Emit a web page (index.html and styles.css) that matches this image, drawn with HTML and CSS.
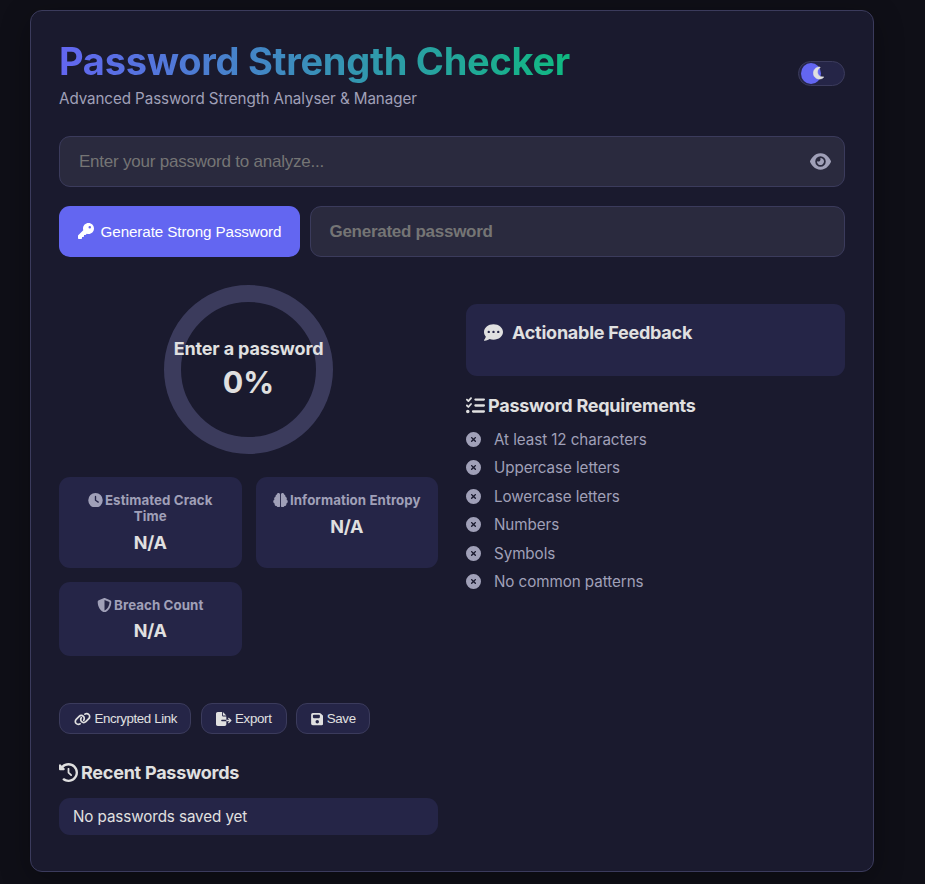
FILE: index.html
```html
<!DOCTYPE html>
<html lang="en">
<head>
<meta charset="utf-8">
<title>Password Strength Checker</title>
<link rel="stylesheet" href="styles.css">
</head>
<body>
<main class="card">
  <header class="header">
    <div>
      <h1 class="title">Password Strength Checker</h1>
      <p class="subtitle">Advanced Password Strength Analyser &amp; Manager</p>
    </div>
    <div class="toggle"><span class="knob"></span><svg class="moon" viewBox="0 0 384 512"><path d="M223.5 32C100 32 0 132.3 0 256S100 480 223.5 480c60.6 0 115.5-24.2 155.8-63.4c5-4.9 6.3-12.5 3.1-18.7s-10.1-9.7-17-8.5c-9.8 1.7-19.8 2.6-30.1 2.6c-96.9 0-175.5-78.8-175.5-176c0-65.8 36-123.1 89.3-153.3c6.1-3.5 9.2-10.5 7.7-17.3s-7.3-11.9-14.3-12.5c-6.3-.5-12.6-.8-19-.8z"/></svg></div>
  </header>

  <div class="field password-field">
    <span class="placeholder">Enter your password to analyze...</span>
    <svg class="eye" viewBox="0 0 576 512"><path d="M288 32c-80.8 0-145.5 36.8-192.6 80.6C48.6 156 17.3 208 2.5 243.7c-3.3 7.9-3.3 16.7 0 24.6C17.3 304 48.6 356 95.4 399.4C142.5 443.2 207.2 480 288 480s145.5-36.8 192.6-80.6c46.8-43.5 78.1-95.4 93-131.1c3.3-7.9 3.3-16.7 0-24.6c-14.9-35.7-46.2-87.7-93-131.1C433.5 68.8 368.8 32 288 32zM144 256a144 144 0 1 1 288 0 144 144 0 1 1 -288 0zm144-64c0 35.3-28.7 64-64 64c-7.1 0-13.9-1.2-20.3-3.3c-5.5-1.8-11.9 1.6-11.7 7.4c.3 6.9 1.3 13.8 3.2 20.7c13.7 51.2 66.4 81.6 117.6 67.9s81.6-66.4 67.9-117.6c-11.1-41.5-47.8-69.4-88.6-71.1c-5.8-.2-9.2 6.1-7.4 11.7c2.1 6.4 3.3 13.2 3.3 20.3z"/></svg>
  </div>

  <div class="generator">
    <button class="generate"><svg class="key" viewBox="0 0 512 512"><path d="M336 352c97.2 0 176-78.8 176-176S433.2 0 336 0S160 78.8 160 176c0 18.7 2.9 36.8 8.3 53.7L7 391c-4.5 4.5-7 10.6-7 17v80c0 13.3 10.7 24 24 24h80c13.3 0 24-10.7 24-24V448h40c13.3 0 24-10.7 24-24V384h40c6.4 0 12.5-2.5 17-7l33.3-33.3c16.9 5.4 35 8.3 53.7 8.3zM376 96a40 40 0 1 1 0 80 40 40 0 1 1 0-80z"/></svg><span>Generate Strong Password</span></button>
    <div class="field generated"><span class="placeholder">Generated password</span></div>
  </div>

  <div class="columns">
    <section>
      <div class="meter">
        <span class="meter-label">Enter a password</span>
        <span class="meter-value">0%</span>
      </div>
      <div class="stats">
        <div class="stat">
          <h3><svg viewBox="0 0 512 512"><path d="M256 0a256 256 0 1 1 0 512A256 256 0 1 1 256 0zM232 120V256c0 8 4 15.5 10.7 20l96 64c11 7.4 25.9 4.4 33.3-6.7s4.4-25.9-6.7-33.3L280 243.2V120c0-13.3-10.7-24-24-24s-24 10.7-24 24z"/></svg>Estimated Crack Time</h3>
          <p>N/A</p>
        </div>
        <div class="stat">
          <h3><svg viewBox="0 0 512 512"><path d="M184 0c30.9 0 56 25.1 56 56V456c0 30.9-25.1 56-56 56c-28.9 0-52.7-21.9-55.7-50.1c-5.2 1.4-10.7 2.1-16.3 2.1c-35.3 0-64-28.7-64-64c0-7.4 1.3-14.6 3.6-21.2C21.4 367.4 0 338.2 0 304c0-31.9 18.7-59.5 45.8-72.3C37.1 220.8 32 207 32 192c0-30.7 21.6-56.3 50.4-62.6C80.8 123.9 80 118 80 112c0-29.9 20.6-55.1 48.3-62.1C131.3 21.9 155.1 0 184 0zM328 0c28.9 0 52.6 21.9 55.7 49.9c27.8 7 48.3 32.1 48.3 62.1c0 6-.8 11.9-2.4 17.4c28.8 6.2 50.4 31.9 50.4 62.6c0 15-5.1 28.8-13.8 39.7C493.3 244.5 512 272.1 512 304c0 34.2-21.4 63.4-51.6 74.8c2.3 6.6 3.6 13.8 3.6 21.2c0 35.3-28.7 64-64 64c-5.6 0-11.1-.7-16.3-2.1c-3 28.2-26.8 50.1-55.7 50.1c-30.9 0-56-25.1-56-56V56c0-30.9 25.1-56 56-56z"/></svg>Information Entropy</h3>
          <p>N/A</p>
        </div>
        <div class="stat">
          <h3><svg viewBox="0 0 512 512"><path d="M256 0c4.6 0 9.2 1 13.4 2.9L457.7 82.8c22 9.3 38.4 31 38.3 57.2c-.5 99.2-41.3 280.7-213.6 363.2c-16.7 8-36.1 8-52.8 0C57.3 420.7 16.5 239.2 16 140c-.1-26.2 16.3-47.9 38.3-57.2L242.7 2.9C246.8 1 251.4 0 256 0zm0 66.8V444.8C394 378 431.1 230.1 432 141.4L256 66.8l0 0z"/></svg>Breach Count</h3>
          <p>N/A</p>
        </div>
      </div>
      <div class="actions">
        <button><svg class="w-link" viewBox="0 0 640 512"><path d="M579.8 267.7c56.5-56.5 56.5-148 0-204.5c-50-50-128.8-56.5-186.3-15.4l-1.6 1.1c-14.4 10.3-17.7 30.3-7.4 44.6s30.3 17.7 44.6 7.4l1.6-1.1c32.1-22.9 76-19.3 103.8 8.6c31.5 31.5 31.5 82.5 0 114L422.3 334.8c-31.5 31.5-82.5 31.5-114 0c-27.9-27.9-31.5-71.8-8.6-103.8l1.1-1.6c10.3-14.4 6.9-34.4-7.4-44.6s-34.4-6.9-44.6 7.4l-1.1 1.6C206.5 251.2 213 330 263 380c56.5 56.5 148 56.5 204.5 0L579.8 267.7zM60.2 244.3c-56.5 56.5-56.5 148 0 204.5c50 50 128.8 56.5 186.3 15.4l1.6-1.1c14.4-10.3 17.7-30.3 7.4-44.6s-30.3-17.7-44.6-7.4l-1.6 1.1c-32.1 22.9-76 19.3-103.8-8.6C74 372 74 321 105.5 289.5L217.7 177.2c31.5-31.5 82.5-31.5 114 0c27.9 27.9 31.5 71.8 8.6 103.9l-1.1 1.6c-10.3 14.4-6.9 34.4 7.4 44.6s34.4 6.9 44.6-7.4l1.1-1.6C433.5 260.8 427 182 377 132c-56.5-56.5-148-56.5-204.5 0L60.2 244.3z"/></svg><span class="tight">Encrypted Link</span></button>
        <button><svg class="w-export" viewBox="0 0 576 512"><path d="M0 64C0 28.7 28.7 0 64 0H224V128c0 17.7 14.3 32 32 32H384V288H216c-13.3 0-24 10.7-24 24s10.7 24 24 24H384V448c0 35.3-28.7 64-64 64H64c-35.3 0-64-28.7-64-64V64zM384 336V288H494.1l-39-39c-9.4-9.4-9.4-24.6 0-33.9s24.6-9.4 33.9 0l80 80c9.4 9.4 9.4 24.6 0 33.9l-80 80c-9.4 9.4-24.6 9.4-33.9 0s-9.4-24.6 0-33.9l39-39H384zm0-208H256V0L384 128z"/></svg><span>Export</span></button>
        <button><svg class="w-save" viewBox="0 0 448 512"><path d="M64 32C28.7 32 0 60.7 0 96V416c0 35.3 28.7 64 64 64H384c35.3 0 64-28.7 64-64V173.3c0-17-6.7-33.3-18.7-45.3L352 50.7C340 38.7 323.7 32 306.7 32H64zm0 96c0-17.7 14.3-32 32-32H288c17.7 0 32 14.3 32 32v64c0 17.7-14.3 32-32 32H96c-17.7 0-32-14.3-32-32V128zM224 288a64 64 0 1 1 0 128 64 64 0 1 1 0-128z"/></svg><span>Save</span></button>
      </div>
      <h2 class="recent-title"><svg viewBox="0 0 512 512"><path d="M75 75L41 41C25.9 25.9 0 36.6 0 57.9V168c0 13.3 10.7 24 24 24H134.1c21.4 0 32.1-25.9 17-41l-30.8-30.8C155 85.5 203 64 256 64c106 0 192 86 192 192s-86 192-192 192c-40.8 0-78.6-12.7-109.7-34.4c-14.5-10.1-34.4-6.6-44.6 7.9s-6.6 34.4 7.9 44.6C151.2 495 201.7 512 256 512c141.4 0 256-114.6 256-256S397.4 0 256 0C185.3 0 121.3 28.7 75 75zm181 53c-13.3 0-24 10.7-24 24V256c0 6.4 2.5 12.5 7 17l72 72c9.4 9.4 24.6 9.4 33.9 0s9.4-24.6 0-33.9l-65-65V152c0-13.3-10.7-24-24-24z"/></svg>Recent Passwords</h2>
      <div class="recent-item">No passwords saved yet</div>
    </section>

    <section class="side">
      <div class="feedback">
        <h2><svg viewBox="0 0 512 512"><path d="M256 448c141.4 0 256-93.1 256-208S397.4 32 256 32S0 125.1 0 240c0 45.1 17.7 86.8 47.7 120.9c-1.9 24.5-11.4 46.3-21.4 62.9c-5.5 9.2-11.1 16.6-15.2 21.6c-2.1 2.5-3.7 4.4-4.9 5.7c-.6 .6-1 1.1-1.3 1.4l-.3 .3c-4.6 4.6-5.9 11.4-3.4 17.4c2.5 6 8.3 9.9 14.8 9.9c28.7 0 57.6-8.9 81.6-19.3c22.9-10 42.4-21.9 54.3-30.6c31.8 11.5 67 17.9 104.1 17.9zM128 208a32 32 0 1 1 0 64 32 32 0 1 1 0-64zm128 0a32 32 0 1 1 0 64 32 32 0 1 1 0-64zm96 32a32 32 0 1 1 64 0 32 32 0 1 1 -64 0z"/></svg>Actionable Feedback</h2>
      </div>
      <h2 class="req-title"><svg viewBox="0 0 512 512"><path d="M152.1 38.2c9.9 8.9 10.7 24 1.8 33.9l-72 80c-4.4 4.9-10.6 7.8-17.2 7.9s-12.9-2.4-17.6-7L7 113C-2.3 103.6-2.3 88.4 7 79s24.6-9.4 33.9 0l22.1 22.1 55.1-61.2c8.9-9.9 24-10.7 33.9-1.8zm0 160c9.9 8.9 10.7 24 1.8 33.9l-72 80c-4.4 4.9-10.6 7.8-17.2 7.9s-12.9-2.4-17.6-7L7 273c-9.4-9.4-9.4-24.6 0-33.9s24.6-9.4 33.9 0l22.1 22.1 55.1-61.2c8.9-9.9 24-10.7 33.9-1.8zM224 96c0-17.7 14.3-32 32-32H480c17.7 0 32 14.3 32 32s-14.3 32-32 32H256c-17.7 0-32-14.3-32-32zm0 160c0-17.7 14.3-32 32-32H480c17.7 0 32 14.3 32 32s-14.3 32-32 32H256c-17.7 0-32-14.3-32-32zM160 416c0-17.7 14.3-32 32-32H480c17.7 0 32 14.3 32 32s-14.3 32-32 32H192c-17.7 0-32-14.3-32-32zM48 368a48 48 0 1 1 0 96 48 48 0 1 1 0-96z"/></svg>Password Requirements</h2>
      <svg class="defs"><symbol id="xmark" viewBox="0 0 512 512"><path d="M256 512A256 256 0 1 0 256 0a256 256 0 1 0 0 512zM175 175c9.4-9.4 24.6-9.4 33.9 0l47 47 47-47c9.4-9.4 24.6-9.4 33.9 0s9.4 24.6 0 33.9l-47 47 47 47c9.4 9.4 9.4 24.6 0 33.9s-24.6 9.4-33.9 0l-47-47-47 47c-9.4 9.4-24.6 9.4-33.9 0s-9.4-24.6 0-33.9l47-47-47-47c-9.4-9.4-9.4-24.6 0-33.9z"/></symbol></svg>
      <ul class="reqs">
        <li><svg><use href="#xmark"/></svg>At least 12 characters</li>
        <li><svg><use href="#xmark"/></svg>Uppercase letters</li>
        <li><svg><use href="#xmark"/></svg>Lowercase letters</li>
        <li><svg><use href="#xmark"/></svg>Numbers</li>
        <li><svg><use href="#xmark"/></svg>Symbols</li>
        <li><svg><use href="#xmark"/></svg>No common patterns</li>
      </ul>
    </section>
  </div>
</main>
</body>
</html>
```
FILE: styles.css
```css
* { box-sizing: border-box; margin: 0; padding: 0; }
html { background: #0f0f17; }
body {
  font-family: Inter, sans-serif;
  font-size: 15.2px;
  color: #e0e0e0;
  background: #0f0f17;
  height: 884px;
  overflow: hidden;
  padding: 10px 0 0 30px;
}
svg { fill: currentColor; flex: none; }
h1, h2, h3 { font-weight: 700; }
.card {
  width: 844px;
  height: 862px;
  padding: 28px;
  background: #1a1a2e;
  border: 1px solid #3b3b5c;
  border-radius: 12px;
  box-shadow: 0 8px 30px rgba(0, 0, 0, 0.3);
}
.header { display: flex; justify-content: space-between; height: 97px; }
.title {
  width: max-content;
  font-size: 38px;
  line-height: 45px;
  letter-spacing: -0.27px;
  background: linear-gradient(90deg, #6366f1, #10b981);
  background-clip: text;
  -webkit-background-clip: text;
  color: transparent;
}
.subtitle { margin-top: 5px; line-height: 20px; letter-spacing: -0.09px; color: #a0a0b8; }
.toggle {
  position: relative;
  width: 47px;
  height: 25px;
  margin-top: 22px;
  border: 1px solid #3b3b5c;
  border-radius: 13px;
  background: #252547;
}
.knob { position: absolute; left: 2px; top: 1px; width: 20px; height: 21px; border-radius: 50%; background: #6366f1; }
.moon { position: absolute; left: 14px; top: 4px; width: 11px; height: 14px; stroke: currentColor; stroke-width: 14px; }
.field {
  display: flex;
  align-items: center;
  height: 51px;
  padding: 0 19px;
  background: #2a2a3e;
  border: 1px solid #3b3b5c;
  border-radius: 11px;
  font-size: 17px;
  color: #757575;
}
.password-field { justify-content: space-between; padding-right: 13px; font-family: "Liberation Sans", sans-serif; letter-spacing: -0.22px; }
.eye { width: 21px; height: 19px; color: #a0a0b8; }
.generator { display: flex; gap: 10px; margin-top: 19px; }
button { font-family: "Liberation Sans", sans-serif; border: 0; }
.generate {
  display: flex;
  align-items: center;
  justify-content: center;
  gap: 7px;
  width: 241px;
  height: 51px;
  border-radius: 11px;
  background: #6366f1;
  color: #fff;
  font-size: 15.2px;
  letter-spacing: -0.1px;
}
.key { width: 16px; height: 16px; margin-top: -1px; }
.generated { flex: 1; padding-left: 18.5px; font-family: "Liberation Sans", sans-serif; font-weight: 700; letter-spacing: -0.28px; }
.columns { display: grid; grid-template-columns: 1fr 1fr; gap: 28px; margin-top: 28px; }
.meter {
  display: flex;
  flex-direction: column;
  align-items: center;
  width: 169px;
  height: 169px;
  margin: 0 auto;
  padding-top: 35px;
  border: 17px solid #3b3b5c;
  border-radius: 50%;
  font-weight: 600;
  white-space: nowrap;
}
.meter-label { font-size: 18px; line-height: 24px; font-weight: 700; letter-spacing: -0.15px; }
.meter-value { font-size: 30.4px; line-height: 38px; margin-top: 2px; font-weight: 700; }
.stats { display: grid; grid-template-columns: 1fr 1fr; gap: 14px; margin-top: 23px; }
.stat {
  padding: 15px 14px 14px;
  background: #252547;
  border-radius: 11px;
  text-align: center;
}
.stat h3 { font-size: 13.3px; line-height: 16px; letter-spacing: 0.08px; color: #a0a0b8; }
.stat h3 svg { width: 15px; height: 14.5px; margin-right: 2px; vertical-align: -2px; }
.stat p { margin-top: 8px; font-size: 18px; line-height: 22px; font-weight: 700; letter-spacing: -0.2px; }
.stat:last-child p { margin-top: 7px; }
.actions { display: flex; gap: 10px; margin-top: 47px; }
.actions button {
  display: flex;
  align-items: center;
  gap: 4px;
  height: 31px;
  padding: 0 14px;
  border: 1px solid #3b3b5c;
  border-radius: 11px;
  background: #252547;
  color: #e0e0e0;
  font-size: 13.3px;
  letter-spacing: -0.3px;
}
.actions button:first-child { padding-right: 13px; }
.actions button:last-child { margin-left: -1px; padding-right: 13px; }
.actions .tight { letter-spacing: -0.39px; }
.actions svg { height: 14px; margin-right: -0.5px; }
.w-link { width: 17px; }
.w-export { width: 15.5px; }
.w-save { width: 12.5px; }
h2 { display: flex; align-items: center; font-size: 18px; line-height: 22px; letter-spacing: -0.25px; }
h2 svg { width: 19px; height: 19px; margin: -1px 3px 1px 0; }
.recent-title { margin-top: 28px; }
.recent-item {
  margin-top: 14px;
  height: 37px;
  padding: 0 14px;
  line-height: 37px;
  letter-spacing: -0.09px;
  border-radius: 11px;
  background: #252547;
}
.side { padding-top: 19px; }
.feedback { height: 72px; padding: 18px; border-radius: 11px; background: #252547; }
.feedback h2 svg { margin-right: 9px; }
.req-title { margin-top: 19px; }
.defs { display: none; }
.reqs { list-style: none; margin-top: 8.4px; color: #a0a0b8; letter-spacing: -0.07px; }
.reqs li { display: flex; align-items: center; gap: 13px; height: 28.4px; }
.reqs svg { width: 15px; height: 15px; }
```
